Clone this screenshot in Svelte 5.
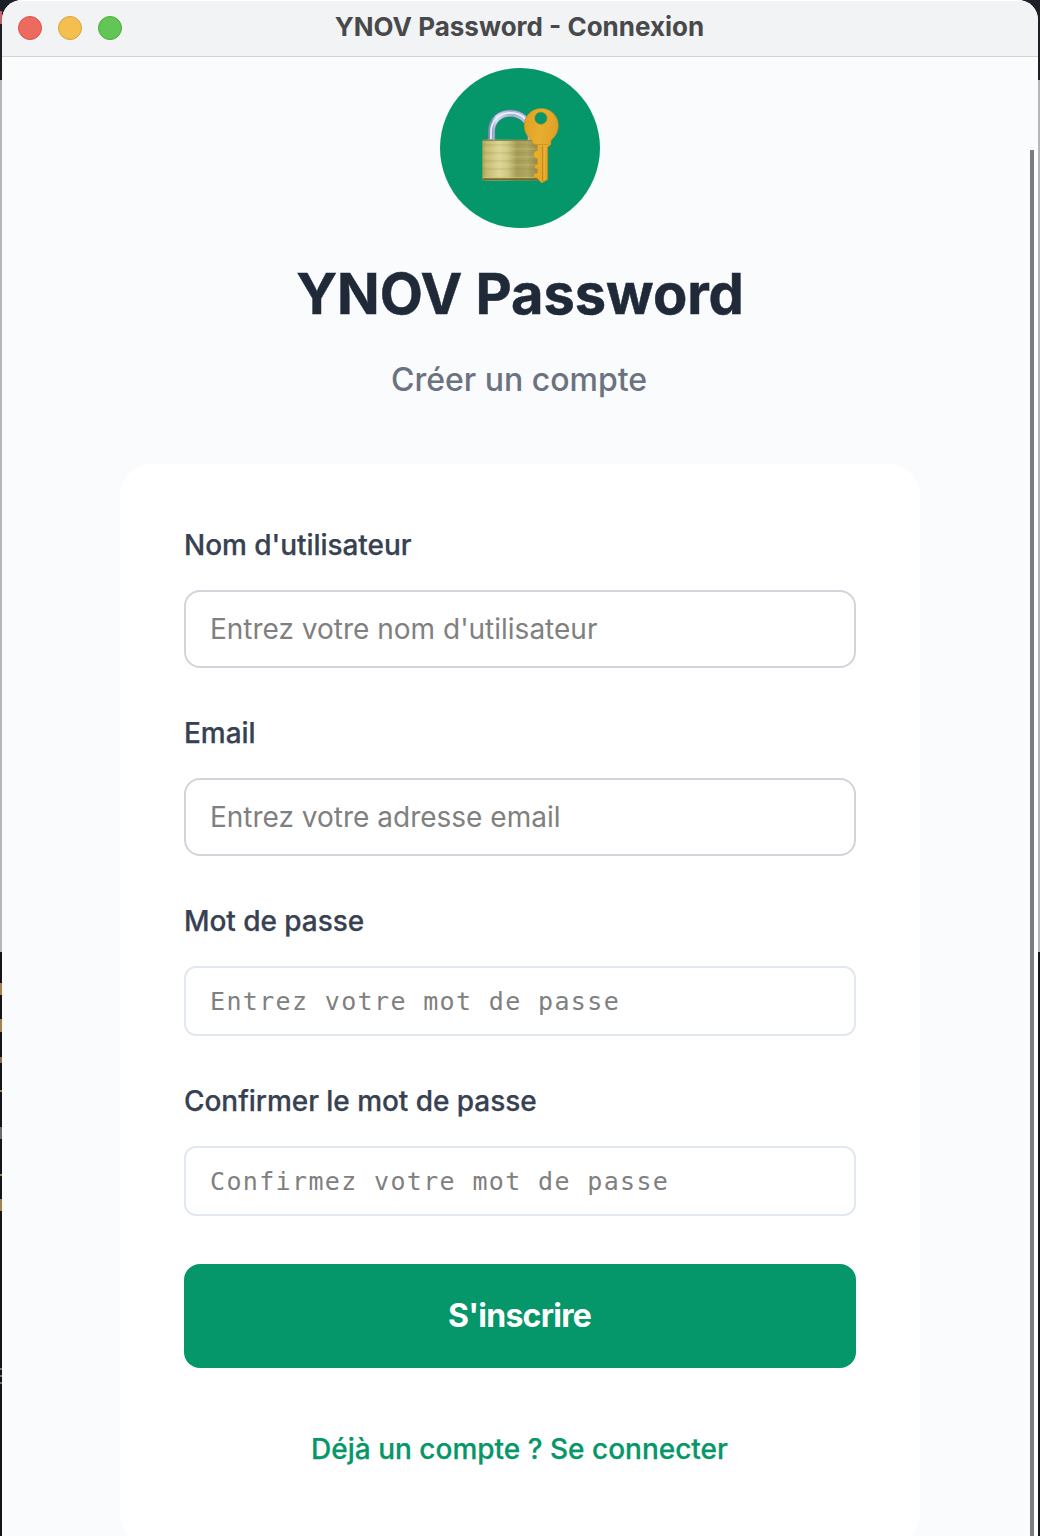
<script lang="ts">
  const fields = [
    { id: 'username', label: "Nom d'utilisateur", placeholder: "Entrez votre nom d'utilisateur", secret: false },
    { id: 'email', label: 'Email', placeholder: 'Entrez votre adresse email', secret: false },
    { id: 'password', label: 'Mot de passe', placeholder: 'Entrez votre mot de passe', secret: true },
    { id: 'confirm', label: 'Confirmer le mot de passe', placeholder: 'Confirmez votre mot de passe', secret: true }
  ];
</script>

<div class="desktop">
  <div class="window">
    <header class="titlebar">
      <div class="lights">
        <span class="light close"></span>
        <span class="light minimize"></span>
        <span class="light zoom"></span>
      </div>
      <div class="window-title">YNOV Password - Connexion</div>
    </header>

    <div class="viewport">
      <main class="page">
        <div class="logo">
          <svg width="100" height="100" viewBox="0 0 100 100" aria-hidden="true">
            <defs>
              <linearGradient id="brass" x1="0" x2="1">
                <stop offset="0" stop-color="#aca155" />
                <stop offset=".08" stop-color="#c4ba70" />
                <stop offset=".3" stop-color="#dcd596" />
                <stop offset=".45" stop-color="#cfc784" />
                <stop offset=".62" stop-color="#a69c58" />
                <stop offset=".8" stop-color="#b0a661" />
                <stop offset="1" stop-color="#948949" />
              </linearGradient>
              <linearGradient id="steel" x1="0" x2="1">
                <stop offset="0" stop-color="#8093b5" />
                <stop offset=".12" stop-color="#d2dff2" />
                <stop offset=".5" stop-color="#a3b5d5" />
                <stop offset="1" stop-color="#b9cae4" />
              </linearGradient>
              <linearGradient id="gold" x1="0" x2="1" y2=".3">
                <stop offset="0" stop-color="#dda023" />
                <stop offset=".5" stop-color="#e8ae30" />
                <stop offset="1" stop-color="#dfa023" />
              </linearGradient>
            </defs>
            <path d="M21.500 46V37C21.500 25 30 18.300 40.500 18.300C51 18.300 60 26 61 38V46" fill="none" stroke="#687b9e" stroke-width="7.400" />
            <path d="M21.500 46V37C21.500 25 30 18.300 40.500 18.300C51 18.300 60 26 61 38V46" fill="none" stroke="url(#steel)" stroke-width="6.200" />
            <path d="M21 44V37C21 25 30 17.800 40.500 17.800C47 17.800 52 20 55 24" fill="none" stroke="#eaf2fd" stroke-width="1.800" />
            <rect x="12.300" y="44.800" width="56" height="40.700" rx="1.500" fill="url(#brass)" />
            <path d="M12.800 45.400H68" stroke="#8a8045" />
            <path d="M13 50H68M13 58H68M13 66H68M13 74H68" stroke="#817b3c" stroke-opacity=".16" stroke-width="1.500" />
            <path d="M13 54H68M13 62H68M13 70H68" stroke="#eee8ae" stroke-opacity=".18" stroke-width="1.500" />
            <path d="M13 82.400H68" stroke="#cfc57c" stroke-opacity=".7" />
            <path d="M12.800 84.300H68" stroke="#75692b" stroke-width="2" />
            <path fill-rule="evenodd" fill="url(#gold)" stroke="#c58818" stroke-width=".6" d="M71.300 13.500C81 13.500 88.300 21 88.300 30.500C88.300 38.300 84 42.500 81 45.500V49.500L77.700 52V84.500L71.700 88L67.300 83.500V83C62.500 83 62.500 78 67.300 78V73.800C63.500 73.800 63.500 69.500 67.300 69.500V63.500C62 63.500 62 56 67.300 55.500V50.500L62 48V45.500C57 41.500 54.200 36.500 54.200 30.500C54.200 21 61.500 13.500 71.300 13.500ZM70.900 17A6.200 6.200 0 1 0 70.900 29.400A6.200 6.200 0 1 0 70.900 17Z" />
            <path d="M66 49.500H78" stroke="#d29620" />
            <path d="M72.600 51V86" stroke="#c98a1b" stroke-width="1.200" />
            <path d="M74.200 51V85" stroke="#f0ba43" stroke-width=".8" />
          </svg>
        </div>
        <h1>YNOV Password</h1>
        <p class="subtitle">Créer un compte</p>

        <form class="card">
          {#each fields as field}
            <div class="field" class:secret={field.secret}>
              <label for={field.id}>{field.label}</label>
              <input id={field.id} type={field.secret ? 'password' : 'text'} placeholder={field.placeholder} />
            </div>
          {/each}
          <button class="submit" type="button">S'inscrire</button>
          <a class="switch" href="#login">Déjà un compte ? Se connecter</a>
        </form>
      </main>
      <div class="scrollbar"></div>
    </div>
  </div>
</div>

<style>
  :global(body) { margin: 0; overflow: hidden; }
  * { box-sizing: border-box; }
  .desktop {
    height: 1536px;
    padding: 0 2px;
    overflow: hidden;
    /* slivers of the windows behind, then their base tones */
    background:
      linear-gradient(#c4626a, #c4626a) 0 11px / 2px 13px no-repeat,
      linear-gradient(#a97f50, #a97f50) 0 983px / 2px 12px no-repeat,
      linear-gradient(#a97f50, #a97f50) 0 1019px / 2px 13px no-repeat,
      linear-gradient(#8f6d4c, #8f6d4c) 0 1057px / 2px 6px no-repeat,
      linear-gradient(#a97f50, #a97f50) 0 1090px / 2px 2px no-repeat,
      linear-gradient(#666b72, #666b72) 0 1127px / 2px 12px no-repeat,
      linear-gradient(#a97f50, #a97f50) 0 1174px / 2px 2px no-repeat,
      linear-gradient(#a97f50, #a97f50) 0 1199px / 2px 12px no-repeat,
      linear-gradient(#707276, #707276) 0 1368px / 2px 2px no-repeat,
      linear-gradient(#707276, #707276) 0 1375px / 2px 2px no-repeat,
      linear-gradient(#707276, #707276) 0 1382px / 2px 2px no-repeat,
      linear-gradient(#1d1f26 0 80px, #b6b7b8 80px 952px, #14151b 952px);
    font-family: Inter, "Liberation Sans", sans-serif;
  }
  .window {
    height: 1536px;
    border-radius: 20px 20px 0 0;
    overflow: hidden;
    background: #fafbfd;
  }
  .titlebar {
    height: 57px;
    display: grid;
    grid-template-columns: 124px 1fr 124px;
    align-items: center;
    background: #f1f3f5;
    border-top: 1px solid #fff;
    border-bottom: 1px solid #d3d4d6;
  }
  .lights { display: flex; gap: 16px; padding: 0 0 2px 16px; }
  .light { width: 24px; height: 24px; border-radius: 50%; border: 1px solid; }
  .close { background: #ed6a5f; border-color: #dc5147; }
  .minimize { background: #f5bf4f; border-color: #d9a13c; }
  .zoom { background: #61c655; border-color: #4cab3c; }
  .window-title {
    text-align: center;
    font-size: 26px;
    line-height: 32px;
    font-weight: 700;
    color: #48494a;
    padding: 0 1px 3px 0;
  }
  .viewport { height: 1479px; display: flex; overflow: hidden; }
  .page {
    width: 1028px;
    flex: none;
    padding: 11px 0 0 8px;
    display: flex;
    flex-direction: column;
    align-items: center;
  }
  .logo {
    width: 160px;
    height: 160px;
    flex: none;
    display: grid;
    place-items: center;
    border-radius: 50%;
    background: #059669;
    padding-bottom: 6px;
  }
  .logo svg { display: block; }
  h1 {
    margin: 32px 0 0;
    font-size: 56px;
    line-height: 68px;
    font-weight: 700;
    letter-spacing: -.05px;
    color: #1f2937;
    -webkit-text-stroke: .5px #1f2937;
  }
  .subtitle {
    margin: 32px 0 0;
    padding-right: 2px;
    font-size: 32px;
    line-height: 40px;
    font-weight: 500;
    color: #6b7280;
  }
  .card {
    width: 800px;
    height: 1082px;
    flex: none;
    margin-top: 64px;
    padding: 64px;
    border-radius: 32px;
    background: #fff;
    display: flex;
    flex-direction: column;
  }
  .field { display: flex; flex-direction: column; margin-bottom: 48px; }
  label {
    font-size: 28px;
    line-height: 34px;
    font-weight: 500;
    letter-spacing: -.05px;
    color: #374151;
    -webkit-text-stroke: .25px #374151;
    margin-bottom: 28px;
  }
  input {
    width: 100%;
    height: 78px;
    padding: 0 24px;
    border: 2px solid #d1d5db;
    border-radius: 16px;
    background: #fff;
    font: 400 28px Inter, "Liberation Sans", sans-serif;
    outline: 0;
  }
  input::placeholder { color: #808080; opacity: 1; }
  .secret input {
    height: 70px;
    border-color: #e2e8f0;
    border-radius: 12px;
    font: 400 25px "DejaVu Sans Mono", monospace;
    letter-spacing: 1.350px;
  }
  .submit {
    height: 104px;
    flex: none;
    border: 0;
    border-radius: 16px;
    padding: 0 1px 2px 0;
    background: #059669;
    color: #fff;
    font: 700 32px Inter, "Liberation Sans", sans-serif;
    letter-spacing: -.75px;
  }
  .switch {
    margin-top: 64px;
    padding-right: 1px;
    text-align: center;
    font-size: 28px;
    line-height: 34px;
    font-weight: 500;
    color: #059669;
    -webkit-text-stroke: .25px #059669;
    text-decoration: none;
  }
  .scrollbar {
    width: 8px;
    height: 1386px;
    margin-top: 93px;
    border-left: 4px solid #7d7d7d;
    background: #fff;
  }
</style>
